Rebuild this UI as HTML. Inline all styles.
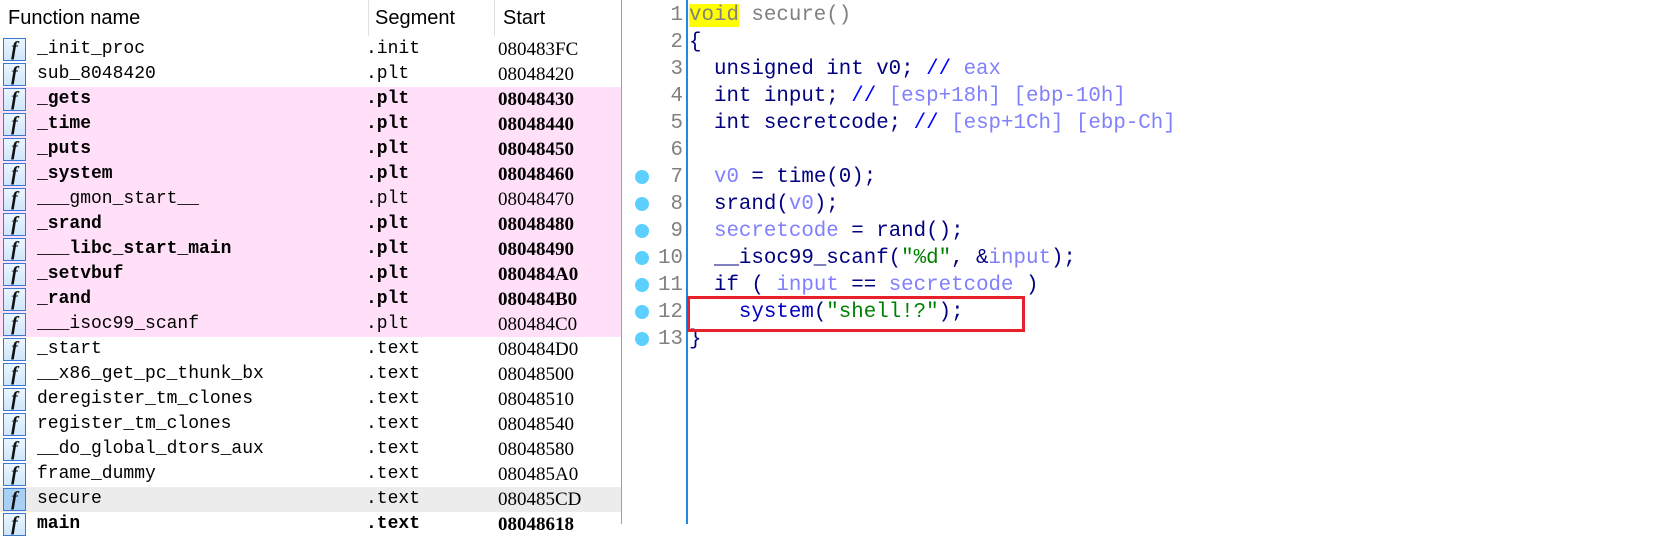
<!DOCTYPE html>
<html><head><meta charset="utf-8"><style>
*{margin:0;padding:0;box-sizing:border-box}
body{width:1665px;height:524px;background:#fff;position:relative;overflow:hidden;font-family:"Liberation Sans",sans-serif}
#left{position:absolute;left:0;top:0;width:622px;height:524px;border-right:1px solid #a0a0a0}
.hdr{position:absolute;top:0;height:36px;font-size:20px;line-height:36px;color:#000}
.sep{position:absolute;top:0;width:1px;height:36px;background:#e0e0e0}
.row{position:absolute;left:0;width:621px;height:25px;font-family:"Liberation Mono",monospace;font-size:18px;line-height:25px;color:#000}
.row.p{background:#ffe0f8}
.row.s{background:#ececec}
.row.b{font-weight:bold}
.ic{position:absolute;left:3px;top:1px;width:23px;height:23px;border:1px solid #3a78d8;background:linear-gradient(#eaf6ff,#cfe6fb);font-family:"Liberation Serif",serif;font-style:italic;font-weight:bold;font-size:20px;line-height:21px;text-align:center;color:#111}
.n{position:absolute;left:37px}
.g{position:absolute;left:366px}
.a{position:absolute;left:498px;font-family:"Liberation Serif",serif;font-size:19px}
#code{position:absolute;left:686px;top:0;width:2px;height:524px;background:#1e88e5}
.ln{position:absolute;font-family:"Liberation Mono",monospace;font-size:20.8px;height:27px;line-height:27px;white-space:pre}
.num{right:982px;color:#808080;text-align:right}
.c{left:689px;color:#000080}
.dot{position:absolute;left:635px;width:14px;height:14px;border-radius:50%;background:#5ccfff}
.v{color:#8080ff}.cm{color:#0000ff}.gr{color:#808080}.st{color:#008000}.fn{color:#0000c0}
#box{position:absolute;left:687px;top:296px;width:338px;height:36px;border:3px solid #e8202a}
</style></head><body>
<div id="left">
<div class="hdr" style="left:8px">Function name</div>
<div class="sep" style="left:368px"></div>
<div class="hdr" style="left:375px">Segment</div>
<div class="sep" style="left:494px"></div>
<div class="hdr" style="left:503px">Start</div>

<div class="row" style="top:37px"><div class="ic">f</div><span class="n">_init_proc</span><span class="g">.init</span><span class="a">080483FC</span></div>
<div class="row" style="top:62px"><div class="ic">f</div><span class="n">sub_8048420</span><span class="g">.plt</span><span class="a">08048420</span></div>
<div class="row p b" style="top:87px"><div class="ic">f</div><span class="n">_gets</span><span class="g">.plt</span><span class="a">08048430</span></div>
<div class="row p b" style="top:112px"><div class="ic">f</div><span class="n">_time</span><span class="g">.plt</span><span class="a">08048440</span></div>
<div class="row p b" style="top:137px"><div class="ic">f</div><span class="n">_puts</span><span class="g">.plt</span><span class="a">08048450</span></div>
<div class="row p b" style="top:162px"><div class="ic">f</div><span class="n">_system</span><span class="g">.plt</span><span class="a">08048460</span></div>
<div class="row p" style="top:187px"><div class="ic">f</div><span class="n">___gmon_start__</span><span class="g">.plt</span><span class="a">08048470</span></div>
<div class="row p b" style="top:212px"><div class="ic">f</div><span class="n">_srand</span><span class="g">.plt</span><span class="a">08048480</span></div>
<div class="row p b" style="top:237px"><div class="ic">f</div><span class="n">___libc_start_main</span><span class="g">.plt</span><span class="a">08048490</span></div>
<div class="row p b" style="top:262px"><div class="ic">f</div><span class="n">_setvbuf</span><span class="g">.plt</span><span class="a">080484A0</span></div>
<div class="row p b" style="top:287px"><div class="ic">f</div><span class="n">_rand</span><span class="g">.plt</span><span class="a">080484B0</span></div>
<div class="row p" style="top:312px"><div class="ic">f</div><span class="n">___isoc99_scanf</span><span class="g">.plt</span><span class="a">080484C0</span></div>
<div class="row" style="top:337px"><div class="ic">f</div><span class="n">_start</span><span class="g">.text</span><span class="a">080484D0</span></div>
<div class="row" style="top:362px"><div class="ic">f</div><span class="n">__x86_get_pc_thunk_bx</span><span class="g">.text</span><span class="a">08048500</span></div>
<div class="row" style="top:387px"><div class="ic">f</div><span class="n">deregister_tm_clones</span><span class="g">.text</span><span class="a">08048510</span></div>
<div class="row" style="top:412px"><div class="ic">f</div><span class="n">register_tm_clones</span><span class="g">.text</span><span class="a">08048540</span></div>
<div class="row" style="top:437px"><div class="ic">f</div><span class="n">__do_global_dtors_aux</span><span class="g">.text</span><span class="a">08048580</span></div>
<div class="row" style="top:462px"><div class="ic">f</div><span class="n">frame_dummy</span><span class="g">.text</span><span class="a">080485A0</span></div>
<div class="row s" style="top:487px"><div class="ic" style="background:#a8d0f4">f</div><span class="n">secure</span><span class="g">.text</span><span class="a">080485CD</span></div>
<div class="row b" style="top:512px"><div class="ic">f</div><span class="n">main</span><span class="g">.text</span><span class="a">08048618</span></div>
</div>

<div id="code"></div>
<div class="ln num" style="top:2px">1</div><div class="ln c" style="top:2px"><span style="background:#ffff00" class="gr">void</span><span class="gr"> secure()</span></div>
<div class="ln num" style="top:29px">2</div><div class="ln c" style="top:29px">{</div>
<div class="ln num" style="top:56px">3</div><div class="ln c" style="top:56px">  unsigned int v0; <span class="cm">//</span> <span class="v">eax</span></div>
<div class="ln num" style="top:83px">4</div><div class="ln c" style="top:83px">  int input; <span class="cm">//</span> <span class="v">[esp+18h] [ebp-10h]</span></div>
<div class="ln num" style="top:110px">5</div><div class="ln c" style="top:110px">  int secretcode; <span class="cm">//</span> <span class="v">[esp+1Ch] [ebp-Ch]</span></div>
<div class="ln num" style="top:137px">6</div>
<div class="ln num" style="top:164px">7</div><div class="ln c" style="top:164px">  <span class="v">v0</span> = time(0);</div>
<div class="ln num" style="top:191px">8</div><div class="ln c" style="top:191px">  srand(<span class="v">v0</span>);</div>
<div class="ln num" style="top:218px">9</div><div class="ln c" style="top:218px">  <span class="v">secretcode</span> = rand();</div>
<div class="ln num" style="top:245px">10</div><div class="ln c" style="top:245px">  __isoc99_scanf(<span class="st">"%d"</span>, &amp;<span class="v">input</span>);</div>
<div class="ln num" style="top:272px">11</div><div class="ln c" style="top:272px">  if ( <span class="v">input</span> == <span class="v">secretcode</span> )</div>
<div class="ln num" style="top:299px">12</div><div class="ln c" style="top:299px">    <span class="fn">system</span>(<span class="st">"shell!?"</span>);</div>
<div class="ln num" style="top:326px">13</div><div class="ln c" style="top:326px">}</div>
<div class="dot" style="top:170px"></div><div class="dot" style="top:197px"></div><div class="dot" style="top:224px"></div><div class="dot" style="top:251px"></div><div class="dot" style="top:278px"></div><div class="dot" style="top:305px"></div><div class="dot" style="top:332px"></div>
<div id="box"></div>
</body></html>
